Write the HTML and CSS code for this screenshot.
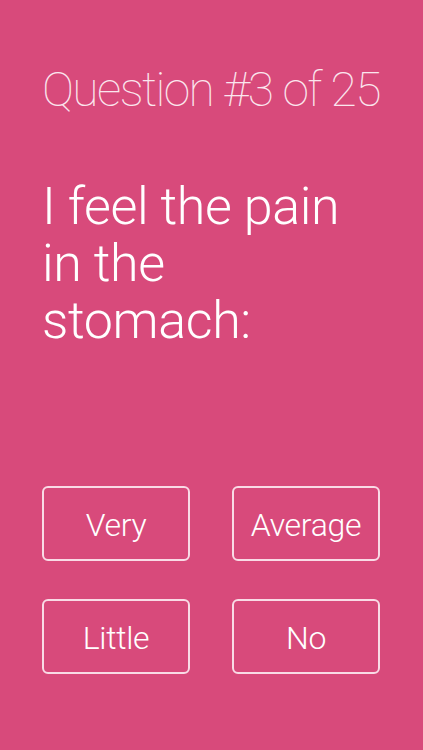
FILE: index.html
```html
<!DOCTYPE html>
<html lang="en">
<head>
    <meta charset="UTF-8">
    <meta name="viewport" content="width=device-width, initial-scale=1.0">
    <title>Question #3 of 25</title>
    <link rel="stylesheet" href="styles.css">
</head>
<body>
    <div class="screen">
        <div class="counter">Question #3 of 25</div>
        <div class="question">I feel the pain<br>in the<br>stomach:</div>
        <div class="answers">
            <button class="answer">Very</button>
            <button class="answer">Average</button>
            <button class="answer">Little</button>
            <button class="answer">No</button>
        </div>
    </div>
</body>
</html>
```

FILE: styles.css
```css
/* General styles */
html, body {
    margin: 0;
    padding: 0;
    height: 100%;
}
body {
    font-family: Roboto, "Liberation Sans", sans-serif;
    background-color: #d84a7b;
    color: #fff;
}
.screen {
    display: flex;
    flex-direction: column;
    height: 100%;
    box-sizing: border-box;
    padding: 62px 43px 0 42px;
}
.counter {
    font-size: 48px;
    font-weight: 100;
    line-height: 56px;
    letter-spacing: -1.6px;
    color: #fbe6ee;
    white-space: nowrap;
}
.question {
    margin-top: 60px;
    font-size: 52px;
    font-weight: 300;
    line-height: 57px;
    letter-spacing: -0.4px;
}
.answers {
    display: grid;
    grid-template-columns: 148px 148px;
    grid-auto-rows: 75px;
    column-gap: 42px;
    row-gap: 38px;
    margin-top: 137px;
}
.answer {
    background: transparent;
    border: 2px solid #f9dbe6;
    border-radius: 6px;
    color: #fff;
    font-family: inherit;
    font-size: 32px;
    font-weight: 300;
    letter-spacing: -0.3px;
    padding: 2px 0 0;
}
```
